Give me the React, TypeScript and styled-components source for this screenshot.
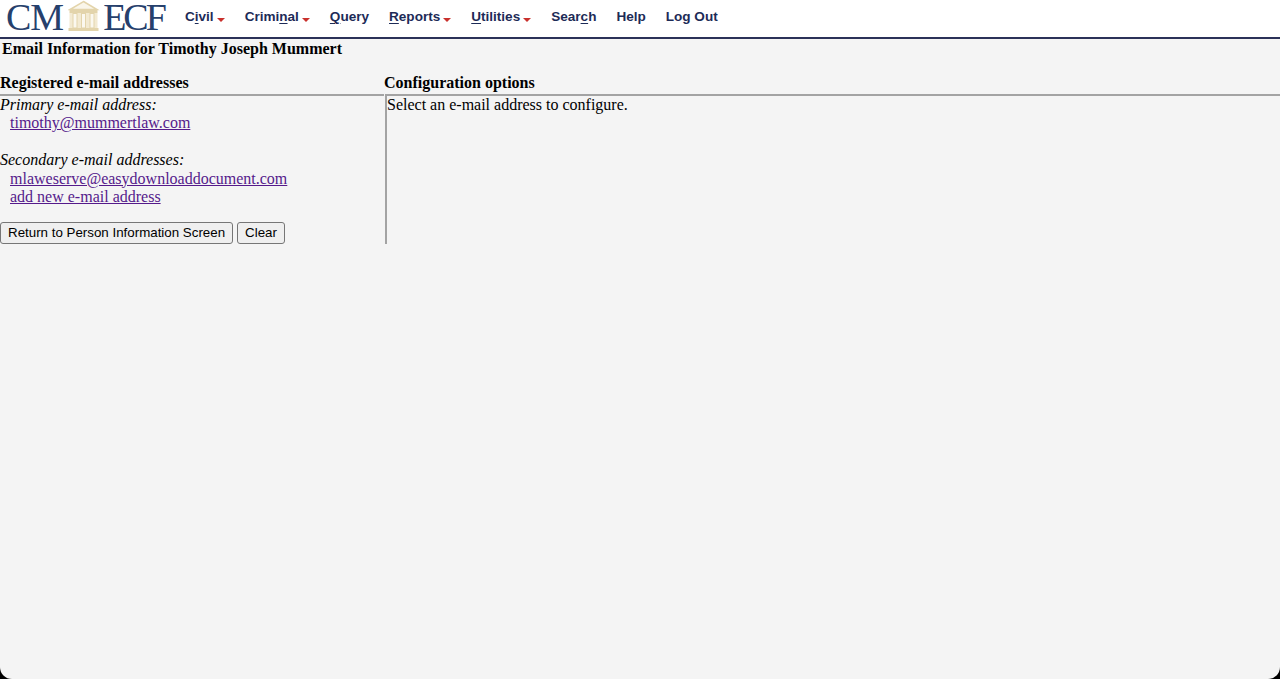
import React from 'react';
import styled, { createGlobalStyle } from 'styled-components';

const GlobalStyle = createGlobalStyle`
  html, body {
    margin: 0;
    padding: 0;
    background: #000;
  }
`;

const Page = styled.div`
  height: 679px;
  overflow: hidden;
  background: #f4f4f4;
  border-radius: 0 0 12px 12px;
  font-family: 'Liberation Serif', serif;
  font-size: 16px;
  color: #000;
`;

const Header = styled.div`
  display: flex;
  align-items: flex-start;
  height: 37px;
  background: #fff;
  border-bottom: 2px solid #2b3158;
`;

const Logo = styled.div`
  display: flex;
  align-items: flex-start;
  width: 185px;
  padding-left: 6px;
  box-sizing: border-box;
  flex-shrink: 0;
  font-size: 38px;
  line-height: 35px;
  color: #26406c;
`;

const LogoText = styled.span<{ $spacing: number }>`
  letter-spacing: ${(p) => p.$spacing}px;
`;

const LogoIcon = styled.svg`
  width: 32px;
  height: 32px;
  margin: 0 3px 0 5px;
  flex-shrink: 0;
`;

const Nav = styled.div`
  display: flex;
  gap: 20px;
  padding-top: 9px;
  font-family: 'Liberation Sans', sans-serif;
  font-size: 13.55px;
  font-weight: bold;
  line-height: 16px;
  color: #1d2b57;
`;

const NavItem = styled.div`
  display: flex;
  align-items: center;
  white-space: nowrap;

  u {
    text-underline-offset: 2px;
  }
`;

const Caret = styled.span`
  width: 0;
  height: 0;
  margin: 5px 0 0 3px;
  border-left: 4px solid transparent;
  border-right: 4px solid transparent;
  border-top: 4px solid #c9302c;
`;

const Title = styled.div`
  padding: 1px 0 0 2px;
  height: 35px;
  box-sizing: border-box;
  font-weight: bold;
  line-height: 18px;
`;

const Columns = styled.div`
  display: grid;
  grid-template-columns: 384px 1fr;
`;

const ColumnHead = styled.div`
  height: 20px;
  line-height: 18px;
  font-weight: bold;
`;

const LeftBody = styled.div`
  height: 150px;
  box-sizing: border-box;
  border-top: 2px solid #a3a3a3;
  line-height: 17.8px;

  & > * {
    line-height: 18.4px;
  }
`;

const RightBody = styled.div`
  height: 150px;
  margin-left: 1px;
  box-sizing: border-box;
  border-top: 2px solid #a3a3a3;
  border-left: 2px solid #a3a3a3;
  line-height: 17.8px;
`;

const Label = styled.div`
  font-style: italic;
`;

const EmailLink = styled.a`
  display: block;
  margin-left: 10px;
  color: #551a8b;
  text-decoration: underline;
`;

const Spacer = styled.div`
  height: 18.4px;
`;

const Buttons = styled.div`
  display: flex;
  gap: 4px;
  margin-top: 16px;
`;

const Button = styled.button`
  height: 22px;
  padding: 0 7px;
  background: #efefef;
  border: 1px solid #767676;
  border-radius: 3px;
  font-family: 'Liberation Sans', sans-serif;
  font-size: 13.33px;
  line-height: 20px;
  color: #000;
`;

export default function App() {
  return (
    <Page>
      <GlobalStyle />
      <Header>
        <Logo>
          <LogoText $spacing={-1}>CM</LogoText>
          <LogoIcon viewBox="0 0 32 32">
            <path d="M15.5 1.5 L29 9.5 H2 Z" fill="#faf6ea" stroke="#e3d4ab" strokeWidth="1.5" />
            <rect x="1.5" y="10" width="28" height="3" fill="#e3d4ab" />
            <rect x="1.5" y="13" width="28" height="15" fill="#f3ead2" />
            <rect x="5" y="13.5" width="4" height="14.5" fill="#fbf8ef" stroke="#e3d4ab" />
            <rect x="13.5" y="13.5" width="4" height="14.5" fill="#fbf8ef" stroke="#e3d4ab" />
            <rect x="22" y="13.5" width="4" height="14.5" fill="#fbf8ef" stroke="#e3d4ab" />
            <rect x="0.5" y="28" width="30" height="3" fill="#e3d4ab" />
          </LogoIcon>
          <LogoText $spacing={-3}>ECF</LogoText>
        </Logo>
        <Nav>
          <NavItem>C<u>i</u>vil<Caret /></NavItem>
          <NavItem>Crimi<u>n</u>al<Caret /></NavItem>
          <NavItem><u>Q</u>uery</NavItem>
          <NavItem><u>R</u>eports<Caret /></NavItem>
          <NavItem><u>U</u>tilities<Caret /></NavItem>
          <NavItem>Sear<u>c</u>h</NavItem>
          <NavItem>Help</NavItem>
          <NavItem>Log Out</NavItem>
        </Nav>
      </Header>
      <Title>Email Information for Timothy Joseph Mummert</Title>
      <Columns>
        <div>
          <ColumnHead>Registered e-mail addresses</ColumnHead>
          <LeftBody>
            <Label>Primary e-mail address:</Label>
            <EmailLink href="#">timothy@mummertlaw.com</EmailLink>
            <Spacer />
            <Label>Secondary e-mail addresses:</Label>
            <EmailLink href="#">mlaweserve@easydownloaddocument.com</EmailLink>
            <EmailLink href="#">add new e-mail address</EmailLink>
            <Buttons>
              <Button>Return to Person Information Screen</Button>
              <Button>Clear</Button>
            </Buttons>
          </LeftBody>
        </div>
        <div>
          <ColumnHead>Configuration options</ColumnHead>
          <RightBody>Select an e-mail address to configure.</RightBody>
        </div>
      </Columns>
    </Page>
  );
}
